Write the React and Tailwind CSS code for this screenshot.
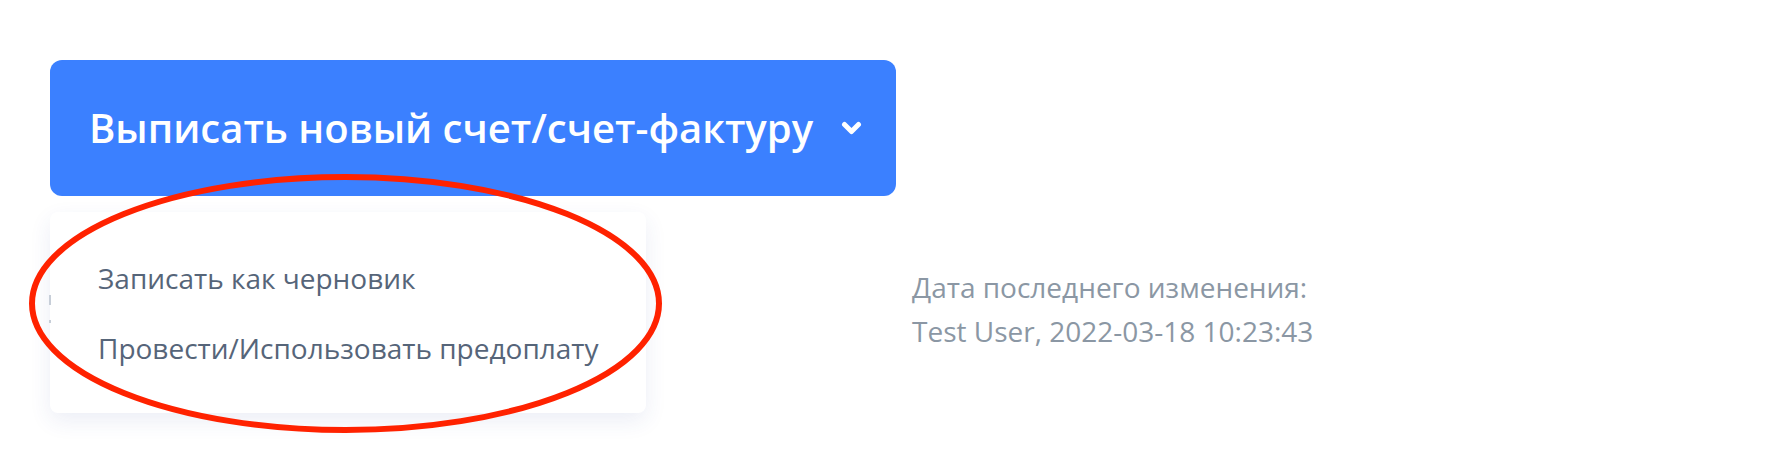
import React from "react";

export default function App() {
  return (
    <div
      className="relative w-[1766px] h-[450px] bg-white overflow-hidden"
      style={{ fontFamily: '"Open Sans", "Noto Sans", sans-serif' }}
    >
      <div className="flex flex-row pt-[60px] pl-[50px]">
        <div className="flex flex-col w-[846px]">
          <button className="flex items-center justify-between w-[846px] h-[136px] rounded-[12px] bg-[#3b80ff] pl-[39px] pr-[34px] text-white">
            <span className="text-[40px] font-semibold leading-none tracking-[0px]">
              Выписать новый счет/счет-фактуру
            </span>
            <svg width="21" height="14" viewBox="0 0 21 14" fill="none">
              <polyline
                points="3.5,3.5 10.5,10.5 17.5,3.5"
                stroke="white"
                strokeWidth="5"
                strokeLinecap="round"
                strokeLinejoin="round"
              />
            </svg>
          </button>
          <div className="relative mt-[16px] w-[596px] h-[201px] rounded-[8px] bg-white shadow-[0_8px_22px_rgba(41,72,152,0.09)] pt-[31px] pl-[48px] text-[28px] text-[#566579]">
            <div className="h-[70px] flex items-center leading-[38px]">
              Записать как черновик
            </div>
            <div className="h-[70px] flex items-center leading-[38px]">
              Провести/Использовать предоплату
            </div>
          </div>
        </div>
        <div className="ml-[16px] mt-[205px] text-[28px] leading-[44px] text-[#8b97a4]">
          <div>Дата последнего изменения:</div>
          <div>Test User, 2022-03-18 10:23:43</div>
        </div>
      </div>
      <div className="absolute left-[49px] top-[295px] w-[2px] h-[10px] bg-[#c7ced8]" />
      <div className="absolute left-[49px] top-[320px] w-[2px] h-[3px] bg-[#c7ced8]" />
      <svg
        className="absolute left-0 top-0 pointer-events-none"
        width="1766"
        height="450"
        viewBox="0 0 1766 450"
      >
        <ellipse
          cx="345.5"
          cy="303.5"
          rx="313.5"
          ry="126.5"
          fill="none"
          stroke="#ff2200"
          strokeWidth="6"
        />
      </svg>
    </div>
  );
}
